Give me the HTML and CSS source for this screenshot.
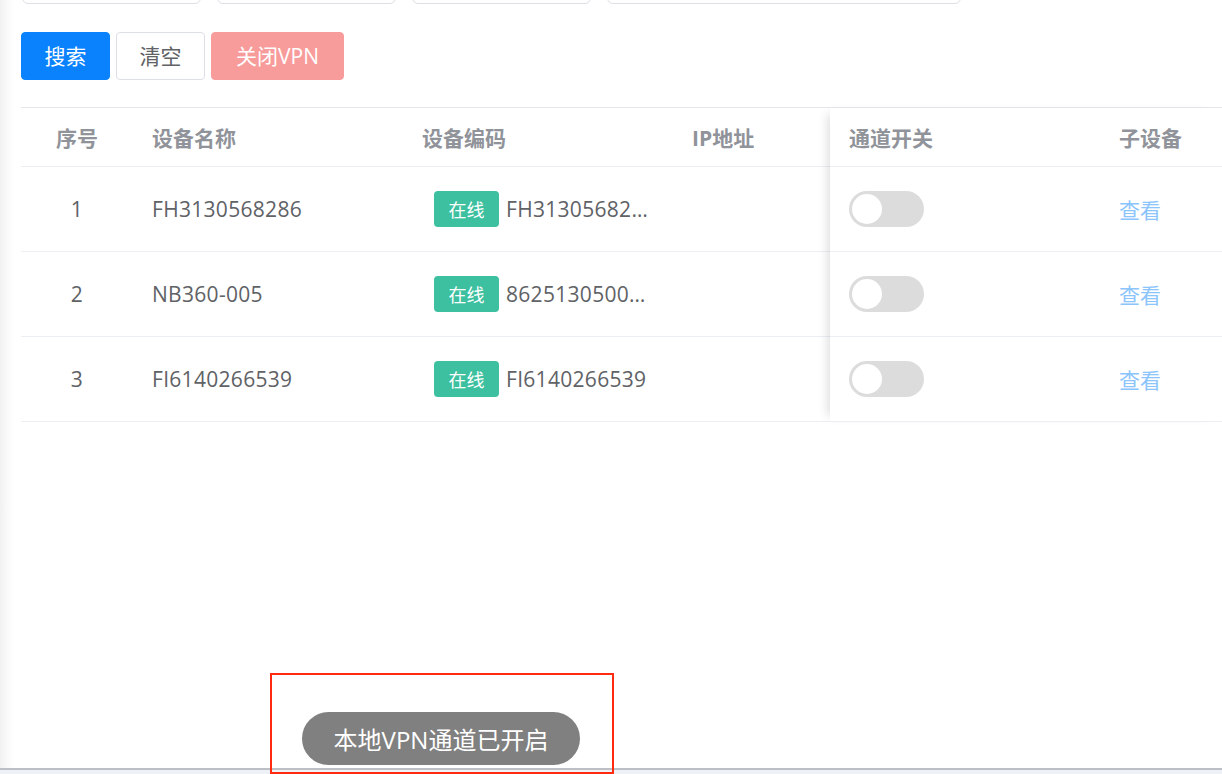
FILE: index.html
```html
<!DOCTYPE html>
<html lang="zh-CN">
<head>
<meta charset="utf-8">
<title>设备列表</title>
<link rel="stylesheet" href="styles.css">
</head>
<body>
<div class="page">
  <div class="content">
    <div class="filters">
      <div class="input w1"></div>
      <div class="input w1"></div>
      <div class="input w1"></div>
      <div class="input w2"></div>
    </div>
    <div class="actions">
      <button class="btn btn-primary">搜索</button>
      <button class="btn btn-default">清空</button>
      <button class="btn btn-danger">关闭VPN</button>
    </div>
    <div class="table">
      <div class="pane main">
        <div class="row head">
          <div class="cell c1 center">序号</div>
          <div class="cell c2">设备名称</div>
          <div class="cell c3">设备编码</div>
          <div class="cell c4">IP地址</div>
        </div>
        <div class="row">
          <div class="cell c1 center">1</div>
          <div class="cell c2">FH3130568286</div>
          <div class="cell c3"><span class="tag">在线</span><span class="ellip">FH3130568286</span></div>
          <div class="cell c4"></div>
        </div>
        <div class="row">
          <div class="cell c1 center">2</div>
          <div class="cell c2">NB360-005</div>
          <div class="cell c3"><span class="tag">在线</span><span class="ellip">862513050012345</span></div>
          <div class="cell c4"></div>
        </div>
        <div class="row">
          <div class="cell c1 center">3</div>
          <div class="cell c2">FI6140266539</div>
          <div class="cell c3"><span class="tag">在线</span><span class="ellip">FI6140266539</span></div>
          <div class="cell c4"></div>
        </div>
      </div>
      <div class="pane fixed">
        <div class="row head">
          <div class="cell c5">通道开关</div>
          <div class="cell c6">子设备</div>
        </div>
        <div class="row">
          <div class="cell c5"><span class="switch"><span class="knob"></span></span></div>
          <div class="cell c6"><a class="link">查看</a></div>
        </div>
        <div class="row">
          <div class="cell c5"><span class="switch"><span class="knob"></span></span></div>
          <div class="cell c6"><a class="link">查看</a></div>
        </div>
        <div class="row">
          <div class="cell c5"><span class="switch"><span class="knob"></span></span></div>
          <div class="cell c6"><a class="link">查看</a></div>
        </div>
      </div>
    </div>
  </div>
  <div class="footer"></div>
</div>
<div class="toast">本地VPN通道已开启</div>
<div class="mark"></div>
</body>
</html>
```

FILE: styles.css
```css
html, body {
  margin: 0;
  padding: 0;
  height: 100%;
  overflow: hidden;
}
body {
  font-family: "Open Sans", "Noto Sans CJK SC", sans-serif;
  background: #fff;
  color: #606266;
}
.page {
  height: 100vh;
  display: flex;
  flex-direction: column;
  background: linear-gradient(to right, #f1f1f1 0, #fafafa 8px, #fff 14px);
}
.content {
  flex: 1;
  padding-left: 21px;
  overflow: hidden;
}
.filters {
  display: flex;
  margin-top: -28px;
  padding-left: 1px;
}
.input {
  height: 30px;
  border: 1px solid #dcdfe6;
  border-radius: 6px;
  background: #fff;
  margin-right: 16px;
}
.input.w1 { width: 177px; }
.input.w2 { width: 352px; }
.actions {
  display: flex;
  gap: 6px;
  margin-top: 28px;
}
.btn {
  height: 48px;
  border-radius: 4px;
  font-family: "Open Sans", "Noto Sans CJK SC", sans-serif;
  font-size: 21px;
  padding: 0;
  border: 1px solid transparent;
  cursor: pointer;
  line-height: 1;
}
.btn-primary {
  width: 89px;
  background: #0a82fd;
  border-color: #0a82fd;
  color: #fff;
}
.btn-default {
  width: 89px;
  background: #fff;
  border-color: #dcdfe6;
  color: #606266;
}
.btn-danger {
  width: 133px;
  background: #f89b9b;
  border-color: #f89b9b;
  color: #fff;
}
.table {
  margin-top: 27px;
  width: 1201px;
  display: flex;
  border-top: 1px solid #e4e7ed;
  font-size: 21px;
}
.pane { display: flex; flex-direction: column; }
.pane.main { width: 809px; }
.pane.fixed {
  width: 392px;
  position: relative;
  box-shadow: -8px 0 10px -6px rgba(0, 0, 0, 0.14);
  background: #fff;
}
.row {
  display: flex;
  height: 84px;
  border-bottom: 1px solid #ebeef5;
  align-items: center;
  letter-spacing: 0.3px;
}
.row.head {
  height: 58px;
  font-weight: 700;
  color: #909399;
  letter-spacing: 0;
}
.cell {
  box-sizing: border-box;
  padding: 0 19px;
  white-space: nowrap;
  overflow: hidden;
  display: flex;
  align-items: center;
}
.cell.center { justify-content: center; }
.c1 { width: 112px; }
.c2 { width: 270px; }
.c3 { width: 270px; padding-right: 24px; }
.c4 { width: 157px; }
.c5 { width: 270px; }
.c6 { flex: 1; }
.tag {
  flex: none;
  display: inline-flex;
  align-items: center;
  justify-content: center;
  width: 65px;
  height: 36px;
  margin-left: 12px;
  margin-right: 7px;
  border-radius: 4px;
  background: #3cc0a0;
  color: #fff;
  font-size: 18px;
  letter-spacing: 0;
}
.ellip {
  overflow: hidden;
  text-overflow: ellipsis;
  min-width: 0;
}
.switch {
  display: inline-block;
  position: relative;
  width: 75px;
  height: 36px;
  border-radius: 18px;
  background: #dcdcdc;
}
.knob {
  position: absolute;
  left: 3px;
  top: 3px;
  width: 30px;
  height: 30px;
  border-radius: 50%;
  background: #fff;
}
.link {
  color: #8cc4fc;
  cursor: pointer;
  letter-spacing: 0;
}
.footer {
  height: 4px;
  border-top: 2px solid #bcc0c6;
  background: #eef1f5;
}
.toast {
  position: absolute;
  left: 302px;
  top: 712px;
  width: 278px;
  height: 53px;
  border-radius: 27px;
  background: #808080;
  color: #fff;
  font-size: 24px;
  display: flex;
  align-items: center;
  justify-content: center;
}
.mark {
  position: absolute;
  left: 270px;
  top: 673px;
  width: 340px;
  height: 97px;
  border: 2px solid #ff2a10;
}
```
